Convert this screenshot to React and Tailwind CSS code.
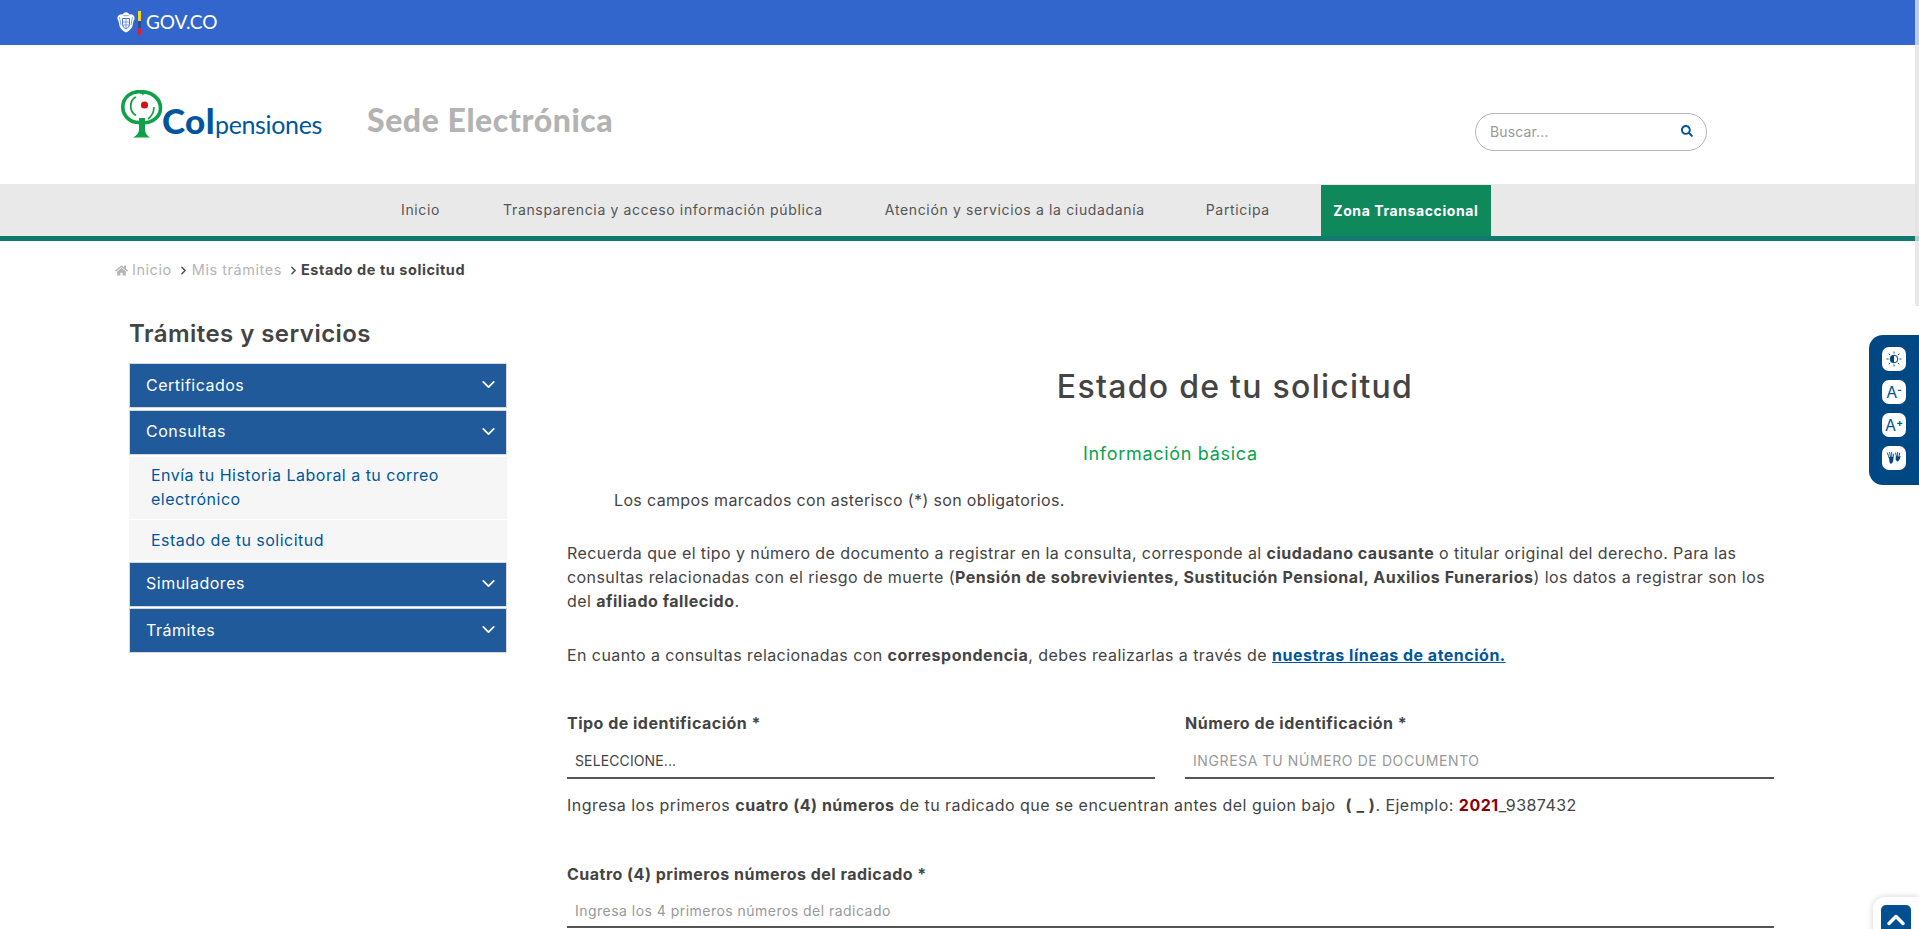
import React from "react";
import { ChevronDown, ChevronUp, ChevronRight } from "lucide-react";
import { FaHome, FaSearch } from "react-icons/fa";

function Escudo() {
  return (
    <svg width="18" height="21" viewBox="0 0 18 21" fill="none">
      <path d="M0.5 5 Q2 1.5 5.5 2.5 Q7 0.3 9 0.3 Q11 0.3 12.5 2.5 Q16 1.5 17.5 5 Q18 7.5 16.5 9 L15.5 14 Q14 18 9 20.5 Q4 18 2.5 14 L1.5 9 Q0 7.5 0.5 5Z" fill="#fff" />
      <path d="M5.5 6.5 H12.5 V12.5 Q12.5 15.5 9 17 Q5.5 15.5 5.5 12.5Z" fill="none" stroke="#3366cc" strokeWidth="0.9" />
      <path d="M9 7 V16 M5.8 10 H12.2 M5.8 13 H12.2" stroke="#3366cc" strokeWidth="0.6" />
      <path d="M2.5 5 L4 13 M15.5 5 L14 13 M6.5 3.6 H11.5" stroke="#3366cc" strokeWidth="0.6" />
    </svg>
  );
}

function LogoMark() {
  return (
    <svg width="42" height="49" viewBox="0 0 42 49" fill="none" className="shrink-0">
      <path d="M24 2.5 C10 -1 1.8 8 1.8 17 C1.8 26 9 32.5 18 32.5" stroke="#11a04a" strokeWidth="3.6" />
      <path d="M19 2 C31 1 39.5 9 39.5 18 C39.5 27 31 33 22 32.8" stroke="#11a04a" strokeWidth="3.6" />
      <path d="M15 7 C8.5 10 7.5 21 15 25.5" stroke="#11a04a" strokeWidth="1.8" />
      <path d="M27 29 C31 26 33 22 33 17" stroke="#11a04a" strokeWidth="1.6" />
      <path d="M19.5 0 L23 3 L22 6 Z" fill="#11a04a" />
      <circle cx="23.5" cy="15" r="3.6" fill="#d3121c" />
      <path d="M18 28 H24 V40 Q24.5 45 29 47.5 H12 Q17.5 45 18 40 Z" fill="#11a04a" />
    </svg>
  );
}

function ContrastIcon() {
  return (
    <svg width="16" height="16" viewBox="0 0 16 16" fill="none">
      <circle cx="8" cy="8" r="3.8" stroke="#00457f" strokeWidth="1" fill="#fff" />
      <path d="M8 4.2 A3.8 3.8 0 0 0 8 11.8 Z" fill="#00457f" />
      <path d="M8 .5 V2.6 M8 13.4 V15.5 M.5 8 H2.6 M13.4 8 H15.5 M2.7 2.7 L4.2 4.2 M11.8 11.8 L13.3 13.3 M13.3 2.7 L11.8 4.2 M4.2 11.8 L2.7 13.3" stroke="#00457f" strokeWidth="0.9" />
    </svg>
  );
}

function HandsIcon() {
  return (
    <svg width="16" height="16" viewBox="0 0 16 16" fill="none">
      <g stroke="#00457f" strokeWidth="0.9" strokeLinecap="round">
        <path d="M1.5 3 L3 7.5 M3.6 2.5 L4.5 7 M5.7 2.5 L5.8 7 M7.8 4 L6.8 7.5" />
        <path d="M9.6 3 L10.6 7 M11.6 2.5 L11.7 7 M13.7 3 L12.9 7" />
      </g>
      <path d="M2.8 7 H7.6 L7.2 11 L6 13.5 H3.8 Z" fill="#00457f" />
      <path d="M9.8 6.5 H13.2 L14.8 6 L13.4 10 L11.3 11.8 L9.6 9.5 Z" fill="#00457f" />
    </svg>
  );
}

function AccButton({ children }) {
  return (
    <div className="w-[24px] h-[24px] bg-white rounded-[7px] flex items-center justify-center text-[#00569d]">
      {children}
    </div>
  );
}

function SideBar({ label, className = "" }) {
  return (
    <div className={`h-[45px] pb-[2px] bg-[#205a9b] border border-[#d8d8d8] flex items-center justify-between pl-[16px] pr-[7px] text-white text-[16px] tracking-[0.5px] ${className}`}>
      <span>{label}</span>
      <ChevronDown size={21} strokeWidth={2} />
    </div>
  );
}

function Field({ label, value, className = "", valueClass = "" }) {
  return (
    <div className={className}>
      <div className="font-bold text-[16px] tracking-[0.49px] leading-[24px] h-[24px] text-[#444]">{label}</div>
      <div className={`border-b-2 border-[#555] pl-[8px] text-[14px] leading-[24px] ${valueClass}`}>
        {value}
      </div>
    </div>
  );
}

export default function App() {
  return (
    <div className="relative h-[929px] overflow-hidden bg-white text-[#444] font-['Inter','Liberation_Sans',sans-serif]">
      {/* Top bar */}
      <div className="h-[45px] bg-[#3366cc] flex items-center pl-[117px]">
        <Escudo />
        <div className="ml-[3px] w-[3px] h-[24px] flex flex-col">
          <div className="h-[10px] bg-[#f7d417]" />
          <div className="h-[7px] bg-[#2b4c9b]" />
          <div className="h-[7px] bg-[#d8203f]" />
        </div>
        <span className="ml-[5px] text-white text-[19px] tracking-[-0.1px] font-['Lato',sans-serif]">GOV.CO</span>
      </div>

      {/* Header */}
      <div className="h-[139px] flex">
        <div className="ml-[121px] mt-[44px] w-[203px] h-[50px] flex items-end">
          <LogoMark />
          <div className="-ml-[1px] flex items-baseline text-[#00569d] font-['Lato',sans-serif] leading-[30px]">
            <span className="text-[35px] font-black tracking-[0.4px]">Col</span>
            <span className="text-[25px] tracking-[-0.35px] font-normal">pensiones</span>
          </div>
        </div>
        <div className="ml-[43px] mt-[55px] h-[40px] text-[32px] leading-[40px] font-black text-[#b3b3b3] tracking-[0.55px] font-['Lato',sans-serif]">
          Sede Electrónica
        </div>
        <div className="ml-auto mr-[212px] mt-[68px] w-[232px] h-[38px] rounded-full border border-[#b5b5b5] flex items-center justify-between pl-[14px] pr-[13px]">
          <span className="text-[14px] tracking-[0.15px] text-[#999] -mt-[2px]">Buscar...</span>
          <FaSearch size={12} className="text-[#00569d] -mt-[3px]" />
        </div>
      </div>

      {/* Nav */}
      <div className="h-[57px] pb-[1px] bg-[#e9e9e9] border-b-[5px] border-[#117a70] flex pl-[401px] text-[14px] tracking-[0.65px] text-[#555]">
        <div className="flex items-center">Inicio</div>
        <div className="flex items-center ml-[63px]">Transparencia y acceso información pública</div>
        <div className="flex items-center ml-[62px]">Atención y servicios a la ciudadanía</div>
        <div className="flex items-center ml-[61px]">Participa</div>
        <div className="flex items-center ml-[51px] w-[170px] mt-[1px] -mb-[1px] justify-center bg-[#0f885c] text-white font-bold tracking-[0.6px]">Zona Transaccional</div>
      </div>

      {/* Breadcrumb */}
      <div className="h-[24px] mt-[17px] pl-[115px] flex items-center text-[14.5px] tracking-[0.55px] text-[#b5b5b5]">
        <FaHome size={13} className="mr-[4px]" />
        <span>Inicio</span>
        <ChevronRight size={13} strokeWidth={3} className="ml-[5px] mr-[2px] text-[#555]" />
        <span>Mis trámites</span>
        <ChevronRight size={13} strokeWidth={3} className="ml-[5px] mr-[1px] text-[#555]" />
        <span className="font-bold text-[#444]">Estado de tu solicitud</span>
      </div>

      {/* Body */}
      <div className="flex pl-[129px] pt-[36px]">
        <aside className="w-[378px] shrink-0">
          <h2 className="text-[24px] leading-[32px] font-semibold tracking-[0.45px] h-[32px] text-[#444]">Trámites y servicios</h2>
          <div className="mt-[13px] flex flex-col">
            <SideBar label="Certificados" />
            <SideBar label="Consultas" className="mt-[1.5px]" />
            <div className="mt-[2px] bg-[#f6f6f6] text-[#00569d] text-[16px] leading-[24px] tracking-[0.48px]">
              <div className="h-[63px] pt-[6px] pl-[22px] pr-[20px] border-b border-white">Envía tu Historia Laboral a tu correo electrónico</div>
              <div className="h-[40px] pl-[22px] flex items-center">Estado de tu solicitud</div>
            </div>
            <SideBar label="Simuladores" className="mt-[2px]" />
            <SideBar label="Trámites" className="mt-[1.5px]" />
          </div>
        </aside>

        <main className="ml-[60px] w-[1208px] text-[16px] leading-[24px] tracking-[0.42px] [&_b]:tracking-[0.52px]">
          <h1 className="mt-[45px] h-[48px] text-center text-[32px] leading-[48px] font-medium tracking-[1.27px] text-[#444] pl-[128px]">Estado de tu solicitud</h1>
          <div className="mt-[31px] h-[24px] text-[18px] text-[#0aa34f] pl-[516px] tracking-[0.7px]">Información básica</div>
          <p className="mt-[22px] pl-[47px] tracking-[0.35px]">Los campos marcados con asterisco (*) son obligatorios.</p>
          <p className="mt-[29px]">
            Recuerda que el tipo y número de documento a registrar en la consulta, corresponde al <b>ciudadano causante</b> o titular original del derecho. Para las consultas relacionadas con el riesgo de muerte (<b>Pensión de sobrevivientes, Sustitución Pensional, Auxilios Funerarios</b>) los datos a registrar son los del <b>afiliado fallecido</b>.
          </p>
          <p className="mt-[30px]">
            En cuanto a consultas relacionadas con <b>correspondencia</b>, debes realizarlas a través de <a className="font-bold tracking-[0.5px] text-[#00569d] underline">nuestras líneas de atención.</a>
          </p>
          <div className="mt-[44px] flex gap-[30px]">
            <Field className="w-[588px]" label="Tipo de identificación *" value="SELECCIONE..." valueClass="mt-[14px] h-[30px] tracking-[0.12px] text-[#444]" />
            <Field className="w-[589px]" label="Número de identificación *" value="INGRESA TU NÚMERO DE DOCUMENTO" valueClass="mt-[14px] h-[30px] tracking-[0.6px] text-[#999]" />
          </div>
          <p className="mt-[14px] tracking-[0.46px]">
            Ingresa los primeros <b>cuatro (4) números</b> de tu radicado que se encuentran antes del guion bajo &nbsp;<b>( _ )</b>. Ejemplo: <b className="text-[#8b0000]">2021</b>_9387432
          </p>
          <div className="mt-[45px]">
            <Field className="w-[1207px]" label="Cuatro (4) primeros números del radicado *" value="Ingresa los 4 primeros números del radicado" valueClass="mt-[13px] h-[29px] tracking-[0.47px] text-[#999]" />
          </div>
        </main>
      </div>

      {/* Scroll indicator */}
      <div className="absolute right-0 top-0 w-[4px] h-[306px] bg-[#e3e3e3]/80" />

      {/* Accessibility panel */}
      <div className="absolute right-0 top-[335px] w-[50px] h-[150px] bg-[#004884] rounded-l-[14px] flex flex-col items-start pl-[13px] pt-[12px] gap-[9px]">
        <AccButton><ContrastIcon /></AccButton>
        <AccButton><span className="text-[16px] leading-none">A<sup className="text-[10px] font-bold">-</sup></span></AccButton>
        <AccButton><span className="text-[16px] leading-none">A<sup className="text-[10px] font-bold">+</sup></span></AccButton>
        <AccButton><HandsIcon /></AccButton>
      </div>

      {/* Back to top */}
      <div className="absolute right-0 top-[897px] w-[46px] h-[60px] bg-white rounded-tl-[12px] shadow-[0_0_6px_rgba(0,0,0,0.18)] pl-[8px] pt-[8px]">
        <div className="w-[30px] h-[30px] bg-[#004f90] rounded-[5px] flex items-center justify-center text-white">
          <ChevronUp size={28} strokeWidth={3} />
        </div>
      </div>
    </div>
  );
}
